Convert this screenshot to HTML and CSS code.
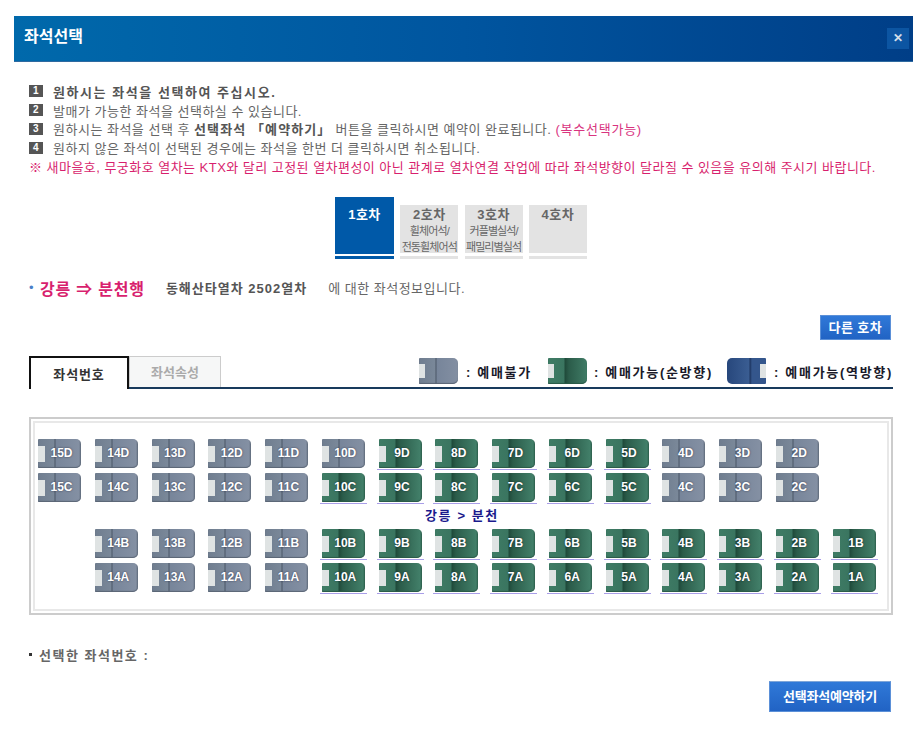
FILE: index.html
```html
<!DOCTYPE html>
<html lang="ko">
<head>
  <meta charset="UTF-8" />
  <title>좌석선택</title>
  <link rel="stylesheet" href="styles.css">
</head>
<body>
  <div class="popup">
    <div class="header">
      <h1>좌석선택</h1>
      <a class="close">✕</a>
    </div>

    <div class="content">
      <ul class="guide">
        <li><span class="num">1</span><strong>원하시는 좌석을 선택하여 주십시오.</strong></li>
        <li><span class="num">2</span>발매가 가능한 좌석을 선택하실 수 있습니다.</li>
        <li><span class="num">3</span>원하시는 좌석을 선택 후 <strong>선택좌석 「예약하기」</strong> 버튼을 클릭하시면 예약이 완료됩니다. <em>(복수선택가능)</em></li>
        <li><span class="num">4</span>원하지 않은 좌석이 선택된 경우에는 좌석을 한번 더 클릭하시면 취소됩니다.</li>
        <li class="notice">※ 새마을호, 무궁화호 열차는 KTX와 달리 고정된 열차편성이 아닌 관계로 열차연결 작업에 따라 좌석방향이 달라질 수 있음을 유의해 주시기 바랍니다.</li>
      </ul>

      <div class="cars">
        <a class="car on"><b>1호차</b></a>
        <a class="car"><b>2호차</b><small>휠체어석/<br>전동휠체어석</small></a>
        <a class="car"><b>3호차</b><small>커플별실석/<br>패밀리별실석</small></a>
        <a class="car"><b>4호차</b></a>
      </div>

      <p class="route">
        <span class="dot">•</span>
        <span class="way">강릉 ⇒ 분천행</span>
        <strong class="train">동해산타열차 2502열차</strong>
        <span class="info">에 대한 좌석정보입니다.</span>
      </p>

      <div class="other"><a class="btn">다른 호차</a></div>

      <div class="tabbar">
        <a class="tab on">좌석번호</a>
        <a class="tab">좌석속성</a>
        <div class="legend">
          <i class="seat big off"></i><span class="legend-a">: 예매불가</span>
          <i class="seat big ok"></i><span class="legend-b">: 예매가능(순방향)</span>
          <i class="seat big rev"></i><span>: 예매가능(역방향)</span>
        </div>
      </div>

      <div class="frame">
        <div class="map">
          <div class="row">
            <a class="seat off">15D</a><a class="seat off">14D</a><a class="seat off">13D</a><a class="seat off">12D</a><a class="seat off">11D</a><a class="seat off">10D</a><a class="seat ok">9D</a><a class="seat ok">8D</a><a class="seat ok">7D</a><a class="seat ok">6D</a><a class="seat ok">5D</a><a class="seat off">4D</a><a class="seat off">3D</a><a class="seat off">2D</a>
          </div>
          <div class="row">
            <a class="seat off">15C</a><a class="seat off">14C</a><a class="seat off">13C</a><a class="seat off">12C</a><a class="seat off">11C</a><a class="seat ok">10C</a><a class="seat ok">9C</a><a class="seat ok">8C</a><a class="seat ok">7C</a><a class="seat ok">6C</a><a class="seat ok">5C</a><a class="seat off">4C</a><a class="seat off">3C</a><a class="seat off">2C</a>
          </div>
          <div class="aisle">강릉 &gt; 분천</div>
          <div class="row">
            <span class="empty"></span><a class="seat off">14B</a><a class="seat off">13B</a><a class="seat off">12B</a><a class="seat off">11B</a><a class="seat ok">10B</a><a class="seat ok">9B</a><a class="seat ok">8B</a><a class="seat ok">7B</a><a class="seat ok">6B</a><a class="seat ok">5B</a><a class="seat ok">4B</a><a class="seat ok">3B</a><a class="seat ok">2B</a><a class="seat ok">1B</a>
          </div>
          <div class="row">
            <span class="empty"></span><a class="seat off">14A</a><a class="seat off">13A</a><a class="seat off">12A</a><a class="seat off">11A</a><a class="seat ok">10A</a><a class="seat ok">9A</a><a class="seat ok">8A</a><a class="seat ok">7A</a><a class="seat ok">6A</a><a class="seat ok">5A</a><a class="seat ok">4A</a><a class="seat ok">3A</a><a class="seat ok">2A</a><a class="seat ok">1A</a>
          </div>
        </div>
      </div>

      <p class="picked"><span class="sq"></span>선택한 좌석번호 :</p>

      <div class="submit"><a class="btn large">선택좌석예약하기</a></div>
    </div>
  </div>
</body>
</html>
```

FILE: styles.css
```css
* {
  box-sizing: border-box;
}

body {
  margin: 0;
  background-color: #ffffff;
  color: #666666;
  font-family: "Liberation Sans", "Noto Sans CJK KR", sans-serif;
  font-size: 13px;
}

.popup {
  margin: 16px 6px 0 14px;
}

.header {
  display: flex;
  justify-content: space-between;
  align-items: center;
  height: 46px;
  padding: 0 4px 2px 10px;
  background: linear-gradient(90deg, #0069ab 0%, #00559f 50%, #003e87 100%);
  border-bottom: 1px solid #2f6aa0;
}

h1 {
  margin: 0 0 5px;
  color: #ffffff;
  font-size: 16px;
  font-weight: bold;
}

.close {
  width: 22px;
  height: 21px;
  margin-top: 1px;
  background-color: #0c55a2;
  color: #d5dfea;
  font-size: 12px;
  font-weight: bold;
  line-height: 21px;
  text-align: center;
}

.content {
  padding: 20px 20px 0 15px;
}

.guide {
  margin: 0;
  padding: 0;
  list-style: none;
  letter-spacing: 0.5px;
}

.guide li {
  display: flex;
  align-items: center;
  height: 18.75px;
  white-space: pre-wrap;
}

.guide strong {
  color: #555555;
  letter-spacing: 1.1px;
}

.guide li:first-child strong {
  letter-spacing: 1.55px;
}

.guide em {
  color: #d9347f;
  font-style: normal;
  letter-spacing: 0.75px;
}

.num {
  flex: none;
  width: 14px;
  height: 12px;
  margin-right: 10px;
  background-color: #555555;
  color: #ffffff;
  font-size: 10px;
  font-weight: bold;
  line-height: 12px;
  text-align: center;
}

.guide .notice {
  color: #d81f6e;
  letter-spacing: 0.47px;
}

.cars {
  display: flex;
  align-items: flex-end;
  gap: 6.3px;
  margin: 21px 0 0 306px;
}

.car {
  width: 58px;
  height: 54px;
  padding-top: 2px;
  border-bottom: 3px solid #e3e3e3;
  background: linear-gradient(#e3e3e3 0, #e3e3e3 48px, #ffffff 48px);
  color: #666666;
  font-size: 11px;
  letter-spacing: -0.9px;
  line-height: 16px;
  text-align: center;
  white-space: nowrap;
}

.car b {
  display: block;
  font-size: 13px;
  letter-spacing: 0.5px;
}

.car small {
  display: block;
  font-size: 11px;
}

.car.on {
  width: 59px;
  height: 62px;
  padding-top: 10px;
  border-bottom-color: #0059a8;
  background: linear-gradient(#0059a8 0, #0059a8 57px, #ffffff 57px);
  color: #ffffff;
}

.route {
  display: flex;
  align-items: center;
  height: 20px;
  margin: 19px 0 0;
}

.dot {
  color: #4a7fc8;
  width: 11px;
}

.way {
  color: #d81f6e;
  font-size: 16px;
  font-weight: bold;
  letter-spacing: 0.8px;
  margin-right: 21px;
}

.train {
  color: #555555;
  letter-spacing: 1px;
  margin-right: 21px;
}

.info {
  letter-spacing: 0.5px;
}

.other {
  display: flex;
  justify-content: flex-end;
  margin: 17px 2px 0 0;
}

.btn {
  display: block;
  padding: 0 8px;
  height: 25px;
  border: 1px solid #5b90d8;
  background: linear-gradient(#3079d8, #2163c4);
  color: #ffffff;
  font-weight: bold;
  letter-spacing: 0.4px;
  line-height: 23px;
}

.btn.large {
  height: 31px;
  padding: 0 13px;
  border-top-color: #7fa6d8;
  letter-spacing: -0.2px;
  line-height: 29px;
}

.tabbar {
  display: flex;
  align-items: flex-end;
  height: 33px;
  margin-top: 16px;
  border-bottom: 2px solid #183a5c;
}

.tab {
  width: 92px;
  height: 31px;
  border: 1px solid #cccccc;
  border-bottom: 0;
  background-color: #f6f7f7;
  color: #aaaaaa;
  font-weight: bold;
  line-height: 31px;
  text-align: center;
}

.tab.on {
  width: 100px;
  height: 33px;
  margin-bottom: -2px;
  border: 2px solid #111111;
  border-bottom: 0;
  background-color: #ffffff;
  color: #333333;
  line-height: 33px;
  letter-spacing: 0.9px;
}

.legend {
  display: flex;
  align-items: center;
  height: 31px;
  margin-left: auto;
  color: #1a1a2a;
  font-weight: bold;
  letter-spacing: 1.7px;
  white-space: nowrap;
}

.legend span {
  margin-left: 8px;
}

.legend .legend-a {
  margin-right: 16px;
}

.legend .legend-b {
  margin-left: 7px;
  margin-right: 14px;
}

.frame {
  margin-top: 28px;
  padding: 2px;
  border: 2px solid #cccccc;
  height: 198px;
}

.map {
  height: 190px;
  padding: 16px 0 0 3px;
  border: 2px solid #e8e8e8;
}

.row {
  display: flex;
  gap: 13.75px;
  height: 34px;
}

.empty {
  width: 43px;
  flex: none;
}

.aisle {
  height: 22px;
  padding-right: 1px;
  color: #1a1a8c;
  font-weight: bold;
  letter-spacing: 1.6px;
  line-height: 18px;
  text-align: center;
}

/* seat picture: back part, divider, then the seat cushion */
.seat {
  position: relative;
  display: block;
  flex: none;
  width: 43px;
  height: 29px;
  border-radius: 1px 5px 5px 1px;
  color: #ffffff;
  font-family: "Liberation Sans", sans-serif;
  font-weight: bold;
  font-size: 12px;
  line-height: 29px;
  padding-left: 4px;
  text-align: center;
  text-shadow: 0 0 2px rgba(0, 0, 30, 0.6);
}

.seat::before {
  content: "";
  position: absolute;
  left: 0;
  top: 7px;
  width: 7px;
  height: 16px;
  background-color: #dfe3e3;
}

.seat.off {
  background: linear-gradient(90deg, #6f7d8f 0, #7a8899 16px, #4a5666 17px, #77859a 18px, #8490a3 41px, #5e6a7a 43px);
  box-shadow: inset 0 -1px 1px #5a6575;
}

.seat.ok {
  background: linear-gradient(90deg, #3f7c65 0, #3a7560 16px, #1f4a3a 17px, #2b5c4a 21px, #427f69 41px, #2c5e4c 43px);
  box-shadow: inset 0 -1px 1px #2a5a48;
}

.seat.ok:not(.big)::after {
  content: "";
  position: absolute;
  left: -2px;
  right: -2px;
  bottom: -2px;
  height: 1px;
  background-color: #a99ee8;
}

.seat.big {
  width: 39px;
  height: 26px;
  padding: 0;
}

.seat.big::before {
  top: 6px;
  width: 6px;
  height: 14px;
}

.seat.rev {
  border-radius: 5px 1px 1px 5px;
  background: linear-gradient(90deg, #27477c 0, #3a5d92 22px, #1d3560 23px, #34568c 25px, #34568c 39px);
}

.seat.rev::before {
  left: auto;
  right: 0;
}

.picked {
  display: flex;
  align-items: center;
  margin: 30px 0 0;
  color: #666666;
  font-weight: bold;
  letter-spacing: 1.5px;
}

.sq {
  width: 3px;
  height: 3px;
  margin-right: 7px;
  background-color: #333333;
}

.submit {
  display: flex;
  justify-content: flex-end;
  margin: 17px 2px 0 0;
}
```
